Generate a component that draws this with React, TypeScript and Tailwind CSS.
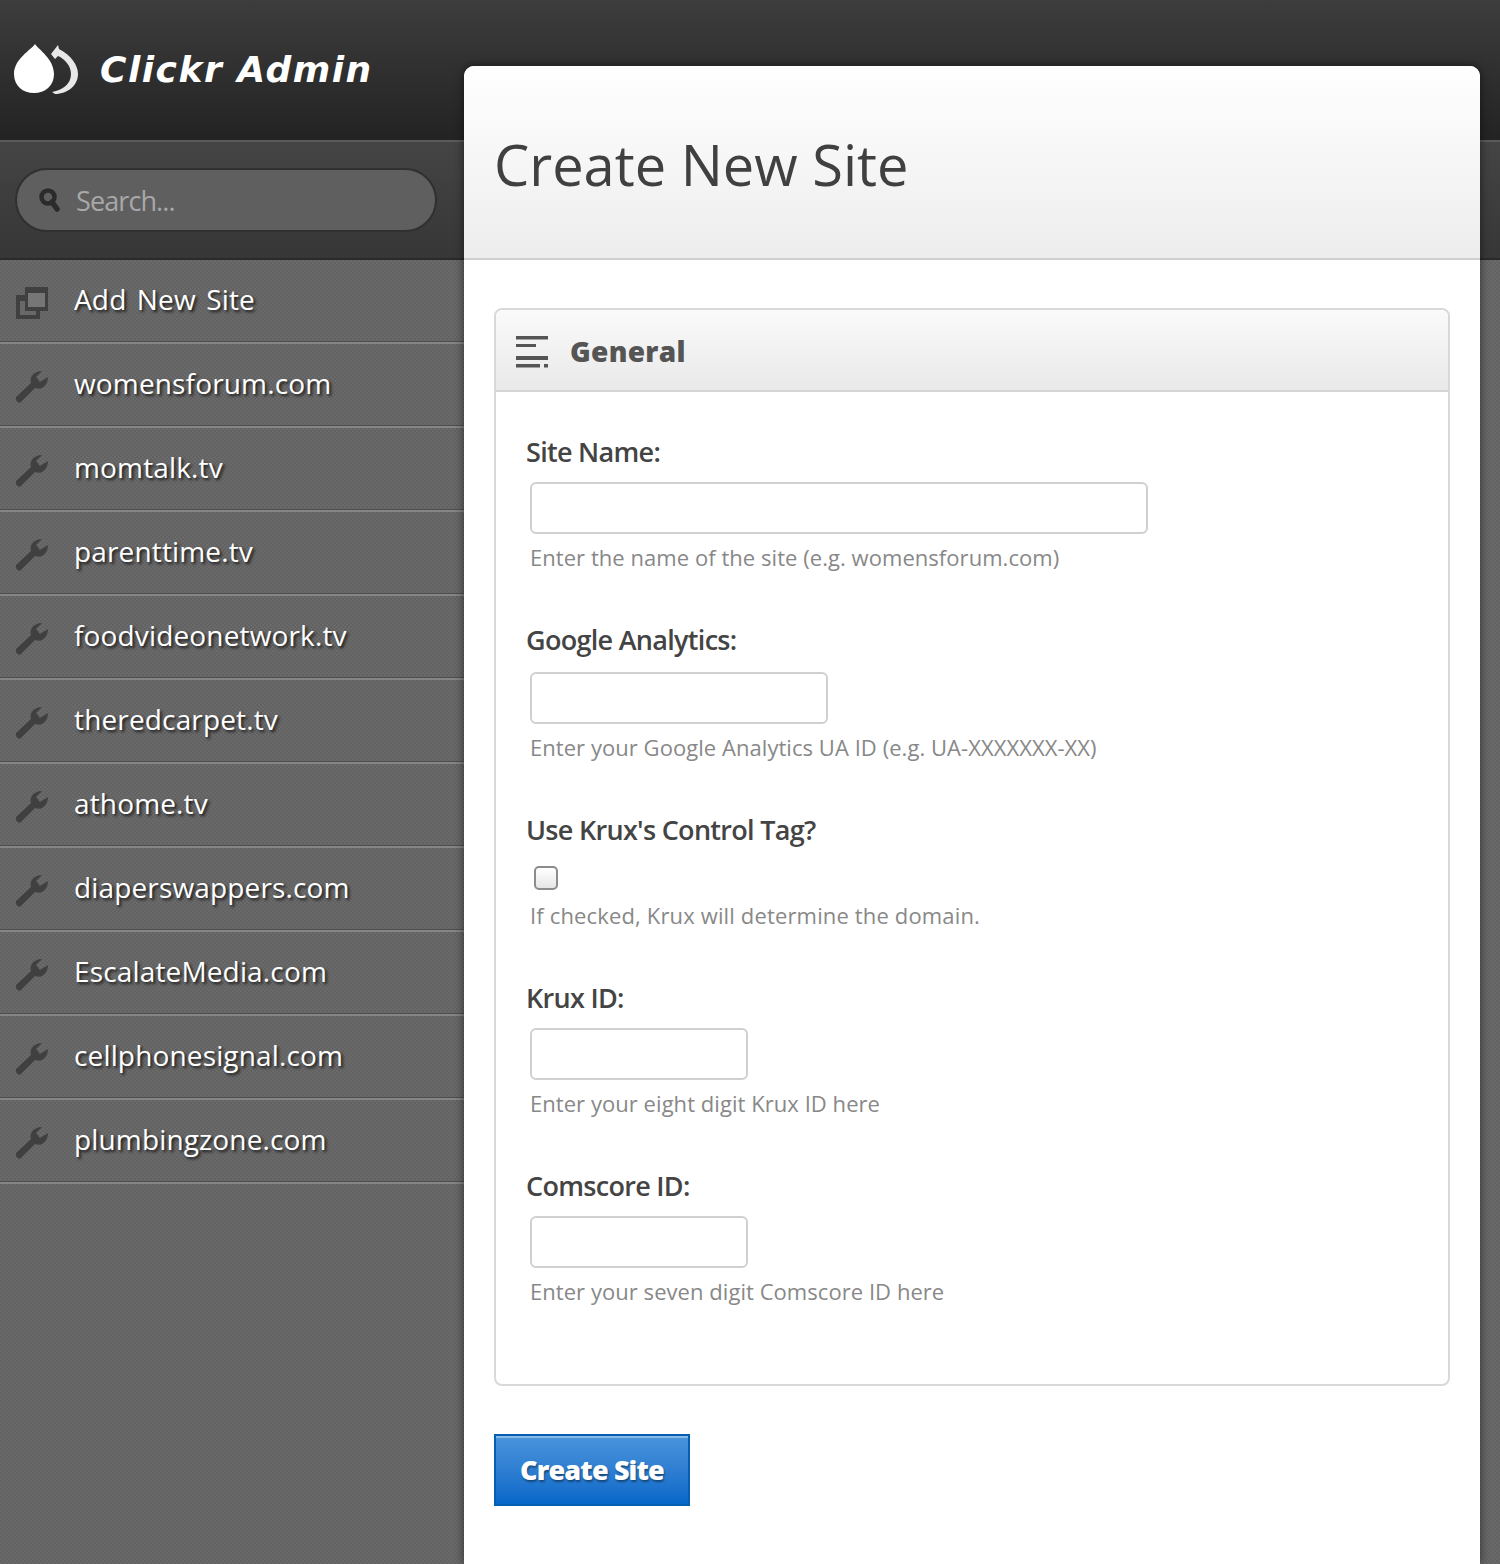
const sites = [
  "womensforum.com",
  "momtalk.tv",
  "parenttime.tv",
  "foodvideonetwork.tv",
  "theredcarpet.tv",
  "athome.tv",
  "diaperswappers.com",
  "EscalateMedia.com",
  "cellphonesignal.com",
  "plumbingzone.com",
];

const LogoIcon = () => (
  <svg width="66" height="52" viewBox="0 0 66 52" className="shrink-0">
    <path d="M21 1 C25 7 40 16 40 31 C40 43 31 50 20 50 C9 50 0 43 0 31 C0 16 17 7 21 1 Z" fill="#fff" />
    <path d="M37 11 L44 2 L45 6 C57 12 64 22 64 31 C64 42 54 51 41 51 L38 49 C49 47 57 41 57 31 C57 23 51 16 44 13 L41 16 Z" fill="#e8e8e8" />
  </svg>
);

const SearchIcon = () => (
  <svg width="22" height="24" viewBox="0 0 22 24" className="shrink-0">
    <circle cx="9" cy="9" r="6.5" fill="none" stroke="#2b2b2b" strokeWidth="4.5" />
    <path d="M13 14 L18 21" stroke="#2b2b2b" strokeWidth="5.5" strokeLinecap="round" />
  </svg>
);

const AddIcon = () => (
  <svg width="32" height="32" viewBox="0 0 32 32" className="shrink-0">
    <path d="M9 0 H32 V24 H24 V32 H0 V8 H9 Z" fill="#404040" />
    <rect x="12" y="6" width="17" height="14" fill="#767676" />
    <path d="M4 14 H9 V24 H20 V28 H4 Z" fill="#686868" />
  </svg>
);

const WrenchIcon = () => (
  <svg width="32" height="32" viewBox="0 0 32 32" className="shrink-0">
    <path d="M0 26 L15 12 C13 6 18 0 26 0 L20 6 L24 11 L32 6 C32 14 26 20 19 17 L5 31 C3 33 -1 30 0 26 Z" fill="#404040" />
  </svg>
);

const LinesIcon = () => (
  <svg width="32" height="32" viewBox="0 0 32 32" className="shrink-0">
    <rect x="0" y="0" width="32" height="3.5" fill="#555" />
    <rect x="0" y="8" width="20" height="3" fill="#555" />
    <rect x="0" y="20" width="32" height="4" fill="#555" />
    <rect x="0" y="28" width="24" height="3.5" fill="#555" />
    <rect x="28" y="28" width="4" height="3.5" fill="#555" />
  </svg>
);

const NavRow = ({ label, icon }: { label: string; icon: React.ReactNode }) => (
  <a className="flex h-[84px] items-center border-b-2 border-b-[#858585] pb-[4px] pl-4 shadow-[inset_0_-1px_0_#4d4d4d]">
    <span className="flex w-[58px] translate-y-[4px]">{icon}</span>
    <span className="text-[28px] leading-none font-medium tracking-[0.15px] [word-spacing:3px] text-white [text-shadow:2px_2px_3px_rgba(0,0,0,0.75)]">{label}</span>
  </a>
);

const Field = ({ label, hint, width, gap = "mt-3" }: { label: string; hint: string; width: string; gap?: string }) => (
  <div className="mb-[48px]">
    <label className="block text-[27px] leading-[36px] font-semibold tracking-[-0.7px] text-[#444]">{label}</label>
    <input type="text" className={`${gap} ml-1 block h-[52px] rounded-md border-2 border-[#d0d0d0] bg-white ${width}`} />
    <p className="mt-[7px] ml-1 pb-[1px] text-[22px] leading-[32px] tracking-[0.05px] text-[#888]">{hint}</p>
  </div>
);

export default function App() {
  return (
    <div className="h-[1564px] overflow-hidden bg-[#666] font-['Open_Sans',sans-serif]">
      <header className="h-[140px] bg-gradient-to-b from-[#3d3d3d] to-[#232323]">
        <div className="flex h-full items-center pl-[14px]">
          <span className="-translate-y-[1px]">
            <LogoIcon />
          </span>
          <span className="ml-[20px] font-['DejaVu_Sans',sans-serif] text-[36px] leading-none font-bold tracking-[1.5px] text-white italic">Clickr Admin</span>
        </div>
      </header>
      <div className="h-[120px] border-t-2 border-b-2 border-t-[#5a5a5a] border-b-[#2a2a2a] bg-gradient-to-b from-[#444] to-[#373737] pt-[26px] pl-[15px]">
        <div className="flex h-[64px] w-[422px] items-center rounded-full border-2 border-[#303030] bg-[#5f5f5f] pl-[22px]">
          <SearchIcon />
          <span className="ml-[15px] text-[27px] leading-none tracking-[-0.9px] text-[#a8a8a8]">Search...</span>
        </div>
      </div>
      <div className="grid grid-cols-[464px_1016px] bg-[repeating-conic-gradient(#6a6a6a_0_25%,#626262_0_50%)] bg-[length:4px_4px]">
        <nav className="h-[1304px]">
          <NavRow label="Add New Site" icon={<AddIcon />} />
          {sites.map((site) => (
            <NavRow key={site} label={site} icon={<WrenchIcon />} />
          ))}
        </nav>
        <main className="-mt-[194px] h-[1498px] rounded-t-[10px] bg-white shadow-[0_0_10px_rgba(0,0,0,0.55)]">
          <div className="flex h-[194px] items-center rounded-t-[10px] border-b-2 border-b-[#cfcfcf] bg-gradient-to-b from-white to-[#ededed] pl-[30px]">
            <h1 className="pt-[3px] text-[56px] leading-none font-normal text-[#404040]">Create New Site</h1>
          </div>
          <section className="mx-[30px] mt-[48px] h-[1078px] rounded-lg border-2 border-[#d9d9d9]">
            <div className="flex h-[82px] items-center rounded-t-lg border-b-2 border-b-[#d5d5d5] bg-gradient-to-b from-[#fafafa] to-[#e9e9e9] pt-[4px] pl-5">
              <LinesIcon />
              <h2 className="ml-[22px] pb-[2px] text-[28px] leading-none font-extrabold tracking-[0.3px] text-[#555]">General</h2>
            </div>
            <div className="pt-[42px] pl-[30px]">
              <Field label="Site Name:" hint="Enter the name of the site (e.g. womensforum.com)" width="w-[618px]" />
              <Field label="Google Analytics:" hint="Enter your Google Analytics UA ID (e.g. UA-XXXXXXX-XX)" width="w-[298px]" gap="mt-[14px]" />
              <div className="mb-[48px]">
                <label className="block text-[27px] leading-[36px] font-semibold tracking-[-0.7px] text-[#444]">Use Krux's Control Tag?</label>
                <input type="checkbox" className="mt-[18px] ml-2 block h-[24px] w-[24px] appearance-none rounded-[5px] border-2 border-[#8c8c8c] bg-gradient-to-b from-white to-[#e6e6e6]" />
                <p className="mt-[9px] ml-1 pb-[1px] text-[22px] leading-[32px] tracking-[0.15px] text-[#888]">If checked, Krux will determine the domain.</p>
              </div>
              <Field label="Krux ID:" hint="Enter your eight digit Krux ID here" width="w-[218px]" />
              <Field label="Comscore ID:" hint="Enter your seven digit Comscore ID here" width="w-[218px]" />
            </div>
          </section>
          <button className="mt-[48px] ml-[30px] h-[72px] w-[196px] border-2 border-[#0560b4] bg-gradient-to-b from-[#4a94dc] to-[#0468c8] pb-[2px] text-[27px] leading-none font-extrabold tracking-[-0.85px] text-white shadow-[inset_0_2px_0_rgba(255,255,255,0.35)] [text-shadow:1px_2px_2px_rgba(0,0,0,0.4)]">
            Create Site
          </button>
        </main>
      </div>
    </div>
  );
}
